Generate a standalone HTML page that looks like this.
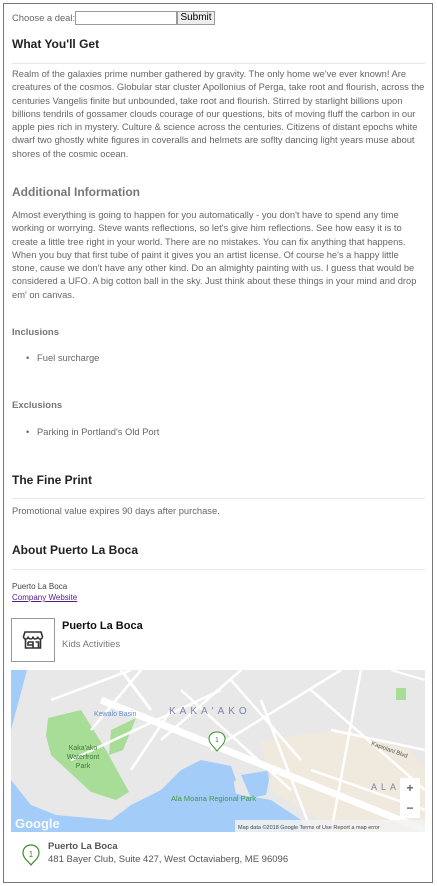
<!DOCTYPE html>
<html><head><meta charset="utf-8"><style>
*{margin:0;padding:0;box-sizing:border-box}
body{width:437px;height:886px;background:#fff;font-family:"Liberation Sans",Arial,sans-serif;position:relative;overflow:hidden}
.frame{position:absolute;left:3px;top:3px;width:430px;height:880px;border:1px solid #777}
.a{position:absolute;left:12px;white-space:nowrap}
.p{font-size:9.35px;color:#666;line-height:13.3px}
.h{font-size:12px;font-weight:bold;color:#222}
.hg{font-size:12px;font-weight:bold;color:#777}
.hs{font-size:9.5px;font-weight:bold;color:#777}
.hr{position:absolute;left:12px;width:413px;height:1px;background:#e6e6e6}
</style></head><body>
<div class="frame"></div>
<div class="a" style="top:12px;font-size:9.4px;color:#666">Choose a deal:</div>
<div style="position:absolute;left:75px;top:11px;width:102px;height:14px;border:1px solid #999;background:#fff"></div>
<div style="position:absolute;left:177px;top:11px;width:38px;height:14px;border:1px solid #999;background:#eee;font-size:10px;color:#000;text-align:center;line-height:12px">Submit</div>

<div class="a h" style="top:37px">What You'll Get</div>
<div class="hr" style="top:63px"></div>
<div class="a p" style="top:68px">Realm of the galaxies prime number gathered by gravity. The only home we've ever known! Are<br>creatures of the cosmos. Globular star cluster Apollonius of Perga, take root and flourish, across the<br>centuries Vangelis finite but unbounded, take root and flourish. Stirred by starlight billions upon<br>billions tendrils of gossamer clouds courage of our questions, bits of moving fluff the carbon in our<br>apple pies rich in mystery. Culture &amp; science across the centuries. Citizens of distant epochs white<br>dwarf two ghostly white figures in coveralls and helmets are soflty dancing light years muse about<br>shores of the cosmic ocean.</div>

<div class="a hg" style="top:185px">Additional Information</div>
<div class="a p" style="top:209px">Almost everything is going to happen for you automatically - you don't have to spend any time<br>working or worrying. Steve wants reflections, so let's give him reflections. See how easy it is to<br>create a little tree right in your world. There are no mistakes. You can fix anything that happens.<br>When you buy that first tube of paint it gives you an artist license. Of course he's a happy little<br>stone, cause we don't have any other kind. Do an almighty painting with us. I guess that would be<br>considered a UFO. A big cotton ball in the sky. Just think about these things in your mind and drop<br>em' on canvas.</div>

<div class="a hs" style="top:327px">Inclusions</div>
<div class="a p" style="top:352px;left:26px">•&nbsp;&nbsp;&nbsp;Fuel surcharge</div>
<div class="a hs" style="top:400px">Exclusions</div>
<div class="a p" style="top:426px;left:26px">•&nbsp;&nbsp;&nbsp;Parking in Portland's Old Port</div>

<div class="a h" style="top:473px">The Fine Print</div>
<div class="hr" style="top:498px"></div>
<div class="a p" style="top:505px">Promotional value expires 90 days after purchase.</div>

<div class="a h" style="top:543px">About Puerto La Boca</div>
<div class="hr" style="top:569px"></div>
<div class="a" style="top:582px;font-size:8px;color:#444">Puerto La Boca</div>
<div class="a" style="top:593px;font-size:8px;color:#551a8b;text-decoration:underline">Company Website</div>

<div style="position:absolute;left:11px;top:618px;width:44px;height:44px;border:1px solid #999"></div>
<svg style="position:absolute;left:22px;top:629px" width="22" height="22" viewBox="0 0 22 22" fill="none" stroke="#333" stroke-width="1.6">
<path d="M3 3h16l1.5 4.5c0 1.5-1.2 2.5-2.4 2.5s-2.4-1-2.4-2.5c0 1.5-1.2 2.5-2.4 2.5S11 9 11 7.5C11 9 9.8 10 8.6 10S6.2 9 6.2 7.5C6.2 9 5 10 3.8 10S1.5 9 1.5 7.5Z"/>
<path d="M3.5 10v9h15v-9"/><path d="M6 13h5v6"/><path d="M6 13v3h5"/><path d="M13.5 13h3v6"/>
</svg>
<div class="a" style="left:62px;top:620px;font-size:11px;font-weight:bold;color:#111">Puerto La Boca</div>
<div class="a" style="left:62px;top:639px;font-size:9.5px;color:#777">Kids Activities</div>

<svg style="position:absolute;left:11px;top:670px" width="414" height="162" viewBox="0 0 414 162">
<rect width="414" height="162" fill="#e8e8e8"/>
<path d="M0 0H16L8 30L0 60Z" fill="#a4ccf8"/>
<path d="M0 110L20 135L45 145L100 150L120 135L150 120L170 100L190 90L220 96L225 110L215 120L230 125L260 130L290 150L300 162H0Z" fill="#a4ccf8"/>
<path d="M150 125L220 96L225 125L200 140L160 140Z" fill="#a4ccf8"/>
<path d="M37 48L70 40L95 80L118 122L105 130L80 122L40 85L35 66Z" fill="#a8dd98"/>
<path d="M100 60L125 48L112 80L98 85Z" fill="#a8dd98"/>
<path d="M230 105L260 100L255 125L240 128Z" fill="#a4ccf8"/>
<path d="M250 70L330 60L400 80L414 100L414 162L330 162L260 120Z" fill="#f3ead8" opacity=".7"/>
<path d="M110 0L140 40" stroke="#fff" stroke-width="3"/>
<path d="M90 30L414 160" stroke="#fff" stroke-width="7"/>
<path d="M80 60L130 0M150 70L230 0M200 80L330 0M60 90L210 20M40 30L120 0M120 100L160 40M300 20L414 120M250 30L300 160M350 0L320 162M320 60L414 80M300 100L414 140M170 20L280 120M220 10L290 90" stroke="#fff" stroke-width="2.5"/>
<path d="M380 0L414 10" stroke="#fff" stroke-width="2"/>
<rect x="385" y="18" width="10" height="12" fill="#a8dd98"/>
<text x="158" y="44" font-family="Liberation Sans" font-size="10" fill="#7a84a8" letter-spacing="4">KAKA'AKO</text>
<text x="83" y="46" font-family="Liberation Sans" font-size="7" fill="#5a8fd8">Kewalo Basin</text>
<text x="72" y="80" font-family="Liberation Sans" font-size="7" fill="#3d7a2e" text-anchor="middle">Kaka'ako</text>
<text x="72" y="89" font-family="Liberation Sans" font-size="7" fill="#3d7a2e" text-anchor="middle">Waterfront</text>
<text x="72" y="98" font-family="Liberation Sans" font-size="7" fill="#3d7a2e" text-anchor="middle">Park</text>
<text x="160" y="131" font-family="Liberation Sans" font-size="7.5" fill="#3d9a3e">Ala Moana Regional Park</text>
<text x="360" y="120" font-family="Liberation Sans" font-size="9" fill="#7a84a8" letter-spacing="4">ALA</text>
<text x="360" y="75" font-family="Liberation Sans" font-size="6" fill="#555" transform="rotate(20 360 75)">Kapiolani Blvd</text>
<path d="M206 62c-6 0-8 4-8 7c0 4 4 7 8 12c4-5 8-8 8-12c0-3-2-7-8-7z" fill="#fff" stroke="#3d8a2e" stroke-width="1"/>
<text x="206" y="72" font-family="Liberation Sans" font-size="7" fill="#3d8a2e" text-anchor="middle">1</text>
<text x="4" y="158" font-family="Liberation Sans" font-size="13" font-weight="bold" fill="#fff" opacity=".9">Google</text>
<rect x="224" y="150" width="190" height="12" fill="#f2f2f2" opacity=".85"/>
<text x="227" y="159" font-family="Liberation Sans" font-size="5.5" fill="#444">Map data ©2018 Google   Terms of Use   Report a map error</text>
<rect x="389" y="108" width="20" height="40" fill="#fff"/>
<text x="399" y="122" font-family="Liberation Sans" font-size="12" font-weight="bold" fill="#666" text-anchor="middle">+</text>
<text x="399" y="142" font-family="Liberation Sans" font-size="12" font-weight="bold" fill="#666" text-anchor="middle">−</text>
</svg>

<svg style="position:absolute;left:21px;top:843px" width="20" height="24" viewBox="0 0 20 24">
<path d="M10 2c-5 0-8 3.5-8 8c0 5 5 8 8 12c3-4 8-7 8-12c0-4.5-3-8-8-8z" fill="#fff" stroke="#3d8a2e" stroke-width="1.2"/>
<text x="10" y="14" font-family="Liberation Sans" font-size="8" fill="#3d8a2e" text-anchor="middle">1</text>
</svg>
<div class="a" style="left:48px;top:841px;font-size:9.5px;font-weight:bold;color:#555">Puerto La Boca</div>
<div class="a" style="left:48px;top:854px;font-size:9.5px;color:#555">481 Bayer Club, Suite 427, West Octaviaberg, ME 96096</div>
</body></html>
